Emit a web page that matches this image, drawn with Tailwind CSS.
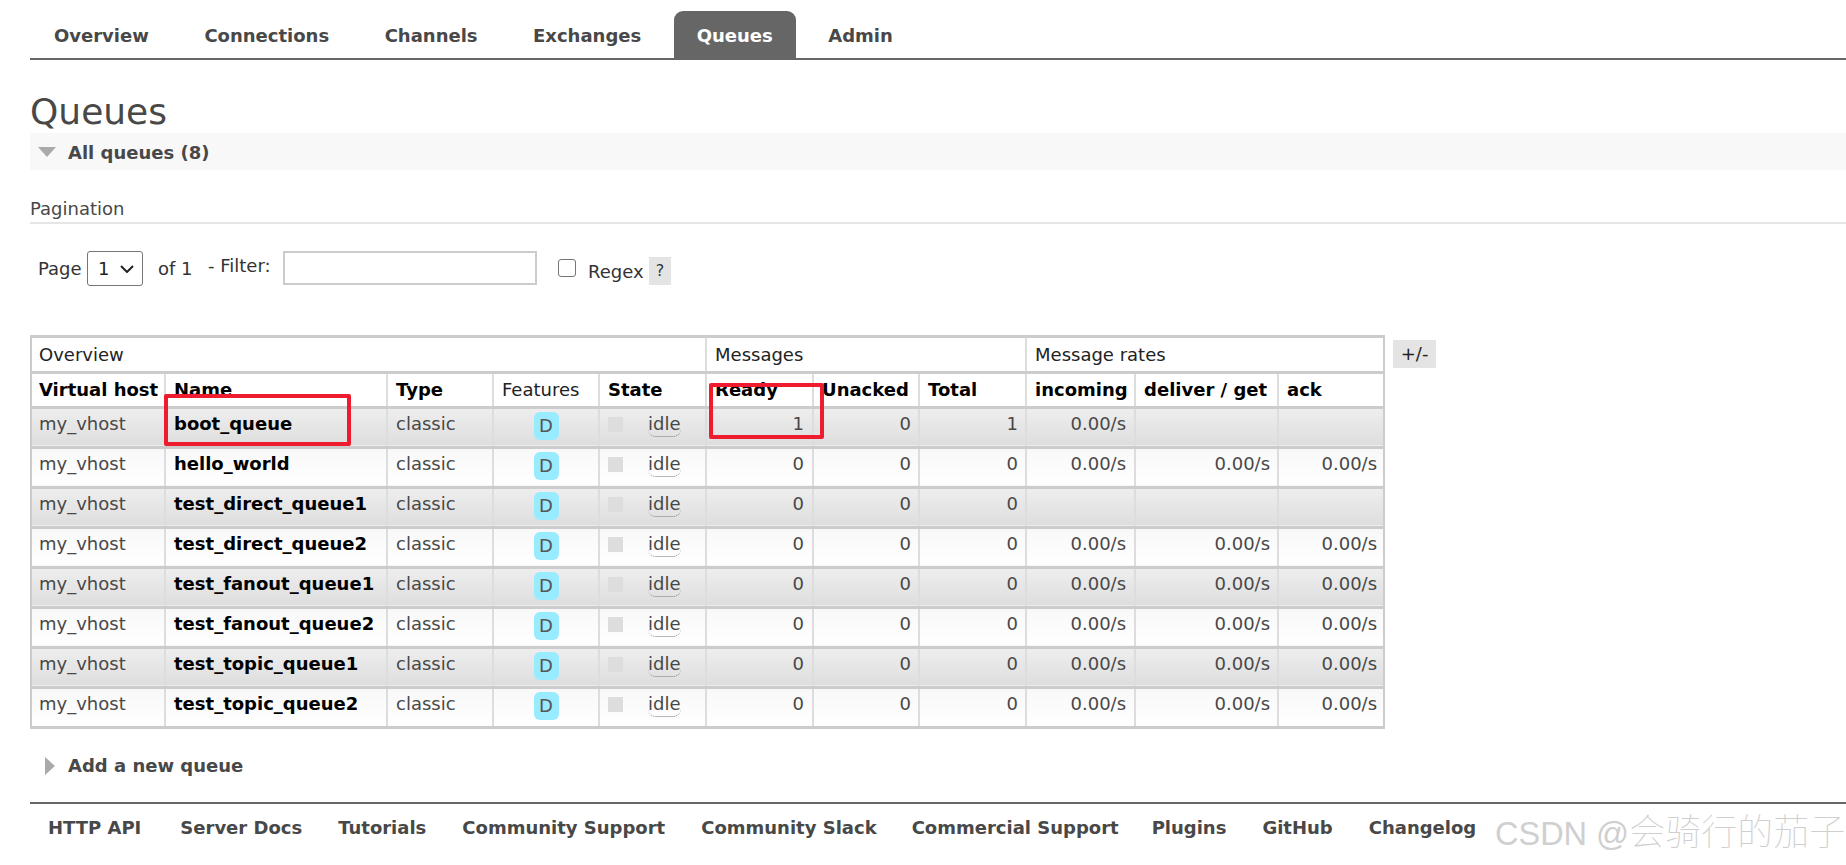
<!doctype html>
<html lang="en">
<head>
<meta charset="utf-8">
<title>Queues</title>
<script src="https://cdn.jsdelivr.net/npm/@tailwindcss/browser@4"></script>
</head>
<body class="relative h-[865px] w-[1846px] overflow-hidden bg-white font-['DejaVu_Sans',sans-serif] text-[18px] leading-[24px] text-[#484848]">
<header class="ml-[30px] flex h-[60px] items-end gap-[9.5px] border-b-2 border-[#666] pl-px font-bold text-[#484848]">
  <a class="flex h-[47px] items-center px-[23px] pt-[2px]">Overview</a>
  <a class="flex h-[47px] items-center px-[23px] pt-[2px]">Connections</a>
  <a class="flex h-[47px] items-center px-[23px] pt-[2px]">Channels</a>
  <a class="flex h-[47px] items-center px-[23px] pt-[2px]">Exchanges</a>
  <a class="flex h-[47px] items-center rounded-t-[9px] bg-[#666] px-[23px] pt-[2px] text-white">Queues</a>
  <a class="flex h-[47px] items-center px-[23px] pt-[2px]">Admin</a>
</header>
<main class="ml-[30px]">
  <h1 class="mt-[30px] h-[43px] text-[36px] leading-[43px] font-normal text-[#484848]">Queues</h1>
  <div class="flex h-[37px] items-center bg-[#f8f8f8] pl-[8px] font-bold">
    <svg width="18" height="10" viewBox="0 0 18 10" class="mr-[12px]"><path d="M0 0H18L9 10Z" fill="#aaa"/></svg>
    <span class="mt-[2px]">All queues (8)</span>
  </div>
  <div class="mt-[27px] h-[27px] border-b-2 border-[#e6e6e6] leading-[24px]">Pagination</div>
  <div class="relative mt-[27px] flex h-[35px] items-start text-[#333]">
    <span class="ml-[8px] mt-[6px] w-[49px]">Page</span>
    <span class="flex h-[35px] w-[56px] items-center justify-between rounded-[3px] border border-[#767676] pl-[10px] pr-[8px] text-[#222]">1<svg width="14" height="8" viewBox="0 0 14 8"><path d="M1 1L7 7L13 1" fill="none" stroke="#222" stroke-width="2"/></svg></span>
    <span class="ml-[15px] mt-[6px] w-[50px]">of 1</span>
    <span class="mt-[3px] w-[75px]">- Filter:</span>
    <span class="h-[34px] w-[254px] border-2 border-[#ccc] bg-white"></span>
    <span class="ml-[21px] mt-[8px] h-[18px] w-[18px] rounded-[3px] border border-[#767676] bg-white"></span>
    <span class="ml-[12px] mt-[9px] w-[61px]">Regex</span>
    <span class="mt-[6px] flex h-[28px] w-[22px] items-center justify-center bg-[#e4e4e4] text-[16px] font-medium">?</span>
  </div>
  <div class="ml-0 mt-[49px] flex items-start">
    <table class="w-[1353px] table-fixed border-collapse border-x-2 border-b-[3px] border-t-[3px] border-[#ccc]">
      <colgroup>
        <col class="w-[134px]"><col class="w-[222px]"><col class="w-[106px]"><col class="w-[106px]"><col class="w-[107px]"><col class="w-[107px]"><col class="w-[106px]"><col class="w-[107px]"><col class="w-[109px]"><col class="w-[143px]"><col class="w-[106px]">
      </colgroup>
      <thead class="text-left text-[#222]">
        <tr class="h-[36px] border-b-[3px] border-[#ccc]">
          <th colspan="5" class="border-r-2 border-[#ddd] pl-[7px] pr-[8px] pt-px font-normal">Overview</th>
          <th colspan="3" class="border-r-2 border-[#ddd] px-[8px] pt-px font-normal">Messages</th>
          <th colspan="3" class="px-[8px] pt-px font-normal">Message rates</th>
        </tr>
        <tr class="h-[35px] border-b-[3px] border-[#ccc] text-black">
          <th class="border-r-2 border-[#ddd] pl-[7px] font-bold whitespace-nowrap">Virtual host</th>
          <th class="border-r-2 border-[#ddd] px-[8px] font-bold">Name</th>
          <th class="border-r-2 border-[#ddd] px-[8px] font-bold">Type</th>
          <th class="border-r-2 border-[#ddd] px-[8px] font-normal text-[#222]">Features</th>
          <th class="border-r-2 border-[#ddd] px-[8px] font-bold">State</th>
          <th class="border-r-2 border-[#ddd] px-[8px] font-bold">Ready</th>
          <th class="border-r-2 border-[#ddd] px-[8px] font-bold">Unacked</th>
          <th class="border-r-2 border-[#ddd] px-[8px] font-bold">Total</th>
          <th class="border-r-2 border-[#ddd] px-[8px] font-bold">incoming</th>
          <th class="border-r-2 border-[#ddd] px-[8px] font-bold">deliver / get</th>
          <th class="px-[8px] font-bold">ack</th>
        </tr>
      </thead>
      <tbody>
        <tr class="h-[40px] border-b-[3px] border-[#ccc] bg-gradient-to-b from-[#eeeeee] to-[#dedede]">
          <td class="border-r-2 border-[#ddd] pl-[7px] pt-[3px] align-top">my_vhost</td>
          <td class="border-r-2 border-[#ddd] pl-[8px] pt-[3px] align-top font-bold text-black">boot_queue</td>
          <td class="border-r-2 border-[#ddd] pl-[8px] pt-[3px] align-top">classic</td>
          <td class="border-r-2 border-[#ddd] pt-[3px] align-top"><span class="mx-auto flex h-[28px] w-[25px] items-center justify-center rounded-[6px] bg-[#99ebff] text-[#555]">D</span></td>
          <td class="border-r-2 border-[#ddd] pl-[8px] pt-[3px] align-top"><div class="flex items-start"><span class="mt-[5px] h-[15px] w-[15px] bg-[#ddd]"></span><span class="ml-[25px] rounded-b-[8px] border-b border-dotted border-[#777] leading-[24px]">idle</span></div></td>
          <td class="border-r-2 border-[#ddd] pr-[8px] pt-[3px] text-right align-top">1</td>
          <td class="border-r-2 border-[#ddd] pr-[7px] pt-[3px] text-right align-top">0</td>
          <td class="border-r-2 border-[#ddd] pr-[7px] pt-[3px] text-right align-top">1</td>
          <td class="border-r-2 border-[#ddd] pr-[8px] pt-[3px] text-right align-top">0.00/s</td>
          <td class="border-r-2 border-[#ddd] pr-[7px] pt-[3px] text-right align-top"></td>
          <td class="pr-[6px] pt-[3px] text-right align-top"></td>
        </tr>
        <tr class="h-[40px] border-b-[3px] border-[#ccc] bg-gradient-to-b from-[#f8f8f8] to-[#ffffff]">
          <td class="border-r-2 border-[#ddd] pl-[7px] pt-[3px] align-top">my_vhost</td>
          <td class="border-r-2 border-[#ddd] pl-[8px] pt-[3px] align-top font-bold text-black">hello_world</td>
          <td class="border-r-2 border-[#ddd] pl-[8px] pt-[3px] align-top">classic</td>
          <td class="border-r-2 border-[#ddd] pt-[3px] align-top"><span class="mx-auto flex h-[28px] w-[25px] items-center justify-center rounded-[6px] bg-[#99ebff] text-[#555]">D</span></td>
          <td class="border-r-2 border-[#ddd] pl-[8px] pt-[3px] align-top"><div class="flex items-start"><span class="mt-[5px] h-[15px] w-[15px] bg-[#ddd]"></span><span class="ml-[25px] rounded-b-[8px] border-b border-dotted border-[#777] leading-[24px]">idle</span></div></td>
          <td class="border-r-2 border-[#ddd] pr-[8px] pt-[3px] text-right align-top">0</td>
          <td class="border-r-2 border-[#ddd] pr-[7px] pt-[3px] text-right align-top">0</td>
          <td class="border-r-2 border-[#ddd] pr-[7px] pt-[3px] text-right align-top">0</td>
          <td class="border-r-2 border-[#ddd] pr-[8px] pt-[3px] text-right align-top">0.00/s</td>
          <td class="border-r-2 border-[#ddd] pr-[7px] pt-[3px] text-right align-top">0.00/s</td>
          <td class="pr-[6px] pt-[3px] text-right align-top">0.00/s</td>
        </tr>
        <tr class="h-[40px] border-b-[3px] border-[#ccc] bg-gradient-to-b from-[#eeeeee] to-[#dedede]">
          <td class="border-r-2 border-[#ddd] pl-[7px] pt-[3px] align-top">my_vhost</td>
          <td class="border-r-2 border-[#ddd] pl-[8px] pt-[3px] align-top font-bold text-black">test_direct_queue1</td>
          <td class="border-r-2 border-[#ddd] pl-[8px] pt-[3px] align-top">classic</td>
          <td class="border-r-2 border-[#ddd] pt-[3px] align-top"><span class="mx-auto flex h-[28px] w-[25px] items-center justify-center rounded-[6px] bg-[#99ebff] text-[#555]">D</span></td>
          <td class="border-r-2 border-[#ddd] pl-[8px] pt-[3px] align-top"><div class="flex items-start"><span class="mt-[5px] h-[15px] w-[15px] bg-[#ddd]"></span><span class="ml-[25px] rounded-b-[8px] border-b border-dotted border-[#777] leading-[24px]">idle</span></div></td>
          <td class="border-r-2 border-[#ddd] pr-[8px] pt-[3px] text-right align-top">0</td>
          <td class="border-r-2 border-[#ddd] pr-[7px] pt-[3px] text-right align-top">0</td>
          <td class="border-r-2 border-[#ddd] pr-[7px] pt-[3px] text-right align-top">0</td>
          <td class="border-r-2 border-[#ddd] pr-[8px] pt-[3px] text-right align-top"></td>
          <td class="border-r-2 border-[#ddd] pr-[7px] pt-[3px] text-right align-top"></td>
          <td class="pr-[6px] pt-[3px] text-right align-top"></td>
        </tr>
        <tr class="h-[40px] border-b-[3px] border-[#ccc] bg-gradient-to-b from-[#f8f8f8] to-[#ffffff]">
          <td class="border-r-2 border-[#ddd] pl-[7px] pt-[3px] align-top">my_vhost</td>
          <td class="border-r-2 border-[#ddd] pl-[8px] pt-[3px] align-top font-bold text-black">test_direct_queue2</td>
          <td class="border-r-2 border-[#ddd] pl-[8px] pt-[3px] align-top">classic</td>
          <td class="border-r-2 border-[#ddd] pt-[3px] align-top"><span class="mx-auto flex h-[28px] w-[25px] items-center justify-center rounded-[6px] bg-[#99ebff] text-[#555]">D</span></td>
          <td class="border-r-2 border-[#ddd] pl-[8px] pt-[3px] align-top"><div class="flex items-start"><span class="mt-[5px] h-[15px] w-[15px] bg-[#ddd]"></span><span class="ml-[25px] rounded-b-[8px] border-b border-dotted border-[#777] leading-[24px]">idle</span></div></td>
          <td class="border-r-2 border-[#ddd] pr-[8px] pt-[3px] text-right align-top">0</td>
          <td class="border-r-2 border-[#ddd] pr-[7px] pt-[3px] text-right align-top">0</td>
          <td class="border-r-2 border-[#ddd] pr-[7px] pt-[3px] text-right align-top">0</td>
          <td class="border-r-2 border-[#ddd] pr-[8px] pt-[3px] text-right align-top">0.00/s</td>
          <td class="border-r-2 border-[#ddd] pr-[7px] pt-[3px] text-right align-top">0.00/s</td>
          <td class="pr-[6px] pt-[3px] text-right align-top">0.00/s</td>
        </tr>
        <tr class="h-[40px] border-b-[3px] border-[#ccc] bg-gradient-to-b from-[#eeeeee] to-[#dedede]">
          <td class="border-r-2 border-[#ddd] pl-[7px] pt-[3px] align-top">my_vhost</td>
          <td class="border-r-2 border-[#ddd] pl-[8px] pt-[3px] align-top font-bold text-black">test_fanout_queue1</td>
          <td class="border-r-2 border-[#ddd] pl-[8px] pt-[3px] align-top">classic</td>
          <td class="border-r-2 border-[#ddd] pt-[3px] align-top"><span class="mx-auto flex h-[28px] w-[25px] items-center justify-center rounded-[6px] bg-[#99ebff] text-[#555]">D</span></td>
          <td class="border-r-2 border-[#ddd] pl-[8px] pt-[3px] align-top"><div class="flex items-start"><span class="mt-[5px] h-[15px] w-[15px] bg-[#ddd]"></span><span class="ml-[25px] rounded-b-[8px] border-b border-dotted border-[#777] leading-[24px]">idle</span></div></td>
          <td class="border-r-2 border-[#ddd] pr-[8px] pt-[3px] text-right align-top">0</td>
          <td class="border-r-2 border-[#ddd] pr-[7px] pt-[3px] text-right align-top">0</td>
          <td class="border-r-2 border-[#ddd] pr-[7px] pt-[3px] text-right align-top">0</td>
          <td class="border-r-2 border-[#ddd] pr-[8px] pt-[3px] text-right align-top">0.00/s</td>
          <td class="border-r-2 border-[#ddd] pr-[7px] pt-[3px] text-right align-top">0.00/s</td>
          <td class="pr-[6px] pt-[3px] text-right align-top">0.00/s</td>
        </tr>
        <tr class="h-[40px] border-b-[3px] border-[#ccc] bg-gradient-to-b from-[#f8f8f8] to-[#ffffff]">
          <td class="border-r-2 border-[#ddd] pl-[7px] pt-[3px] align-top">my_vhost</td>
          <td class="border-r-2 border-[#ddd] pl-[8px] pt-[3px] align-top font-bold text-black">test_fanout_queue2</td>
          <td class="border-r-2 border-[#ddd] pl-[8px] pt-[3px] align-top">classic</td>
          <td class="border-r-2 border-[#ddd] pt-[3px] align-top"><span class="mx-auto flex h-[28px] w-[25px] items-center justify-center rounded-[6px] bg-[#99ebff] text-[#555]">D</span></td>
          <td class="border-r-2 border-[#ddd] pl-[8px] pt-[3px] align-top"><div class="flex items-start"><span class="mt-[5px] h-[15px] w-[15px] bg-[#ddd]"></span><span class="ml-[25px] rounded-b-[8px] border-b border-dotted border-[#777] leading-[24px]">idle</span></div></td>
          <td class="border-r-2 border-[#ddd] pr-[8px] pt-[3px] text-right align-top">0</td>
          <td class="border-r-2 border-[#ddd] pr-[7px] pt-[3px] text-right align-top">0</td>
          <td class="border-r-2 border-[#ddd] pr-[7px] pt-[3px] text-right align-top">0</td>
          <td class="border-r-2 border-[#ddd] pr-[8px] pt-[3px] text-right align-top">0.00/s</td>
          <td class="border-r-2 border-[#ddd] pr-[7px] pt-[3px] text-right align-top">0.00/s</td>
          <td class="pr-[6px] pt-[3px] text-right align-top">0.00/s</td>
        </tr>
        <tr class="h-[40px] border-b-[3px] border-[#ccc] bg-gradient-to-b from-[#eeeeee] to-[#dedede]">
          <td class="border-r-2 border-[#ddd] pl-[7px] pt-[3px] align-top">my_vhost</td>
          <td class="border-r-2 border-[#ddd] pl-[8px] pt-[3px] align-top font-bold text-black">test_topic_queue1</td>
          <td class="border-r-2 border-[#ddd] pl-[8px] pt-[3px] align-top">classic</td>
          <td class="border-r-2 border-[#ddd] pt-[3px] align-top"><span class="mx-auto flex h-[28px] w-[25px] items-center justify-center rounded-[6px] bg-[#99ebff] text-[#555]">D</span></td>
          <td class="border-r-2 border-[#ddd] pl-[8px] pt-[3px] align-top"><div class="flex items-start"><span class="mt-[5px] h-[15px] w-[15px] bg-[#ddd]"></span><span class="ml-[25px] rounded-b-[8px] border-b border-dotted border-[#777] leading-[24px]">idle</span></div></td>
          <td class="border-r-2 border-[#ddd] pr-[8px] pt-[3px] text-right align-top">0</td>
          <td class="border-r-2 border-[#ddd] pr-[7px] pt-[3px] text-right align-top">0</td>
          <td class="border-r-2 border-[#ddd] pr-[7px] pt-[3px] text-right align-top">0</td>
          <td class="border-r-2 border-[#ddd] pr-[8px] pt-[3px] text-right align-top">0.00/s</td>
          <td class="border-r-2 border-[#ddd] pr-[7px] pt-[3px] text-right align-top">0.00/s</td>
          <td class="pr-[6px] pt-[3px] text-right align-top">0.00/s</td>
        </tr>
        <tr class="h-[40px] bg-gradient-to-b from-[#f8f8f8] to-[#ffffff]">
          <td class="border-r-2 border-[#ddd] pl-[7px] pt-[3px] align-top">my_vhost</td>
          <td class="border-r-2 border-[#ddd] pl-[8px] pt-[3px] align-top font-bold text-black">test_topic_queue2</td>
          <td class="border-r-2 border-[#ddd] pl-[8px] pt-[3px] align-top">classic</td>
          <td class="border-r-2 border-[#ddd] pt-[3px] align-top"><span class="mx-auto flex h-[28px] w-[25px] items-center justify-center rounded-[6px] bg-[#99ebff] text-[#555]">D</span></td>
          <td class="border-r-2 border-[#ddd] pl-[8px] pt-[3px] align-top"><div class="flex items-start"><span class="mt-[5px] h-[15px] w-[15px] bg-[#ddd]"></span><span class="ml-[25px] rounded-b-[8px] border-b border-dotted border-[#777] leading-[24px]">idle</span></div></td>
          <td class="border-r-2 border-[#ddd] pr-[8px] pt-[3px] text-right align-top">0</td>
          <td class="border-r-2 border-[#ddd] pr-[7px] pt-[3px] text-right align-top">0</td>
          <td class="border-r-2 border-[#ddd] pr-[7px] pt-[3px] text-right align-top">0</td>
          <td class="border-r-2 border-[#ddd] pr-[8px] pt-[3px] text-right align-top">0.00/s</td>
          <td class="border-r-2 border-[#ddd] pr-[7px] pt-[3px] text-right align-top">0.00/s</td>
          <td class="pr-[6px] pt-[3px] text-right align-top">0.00/s</td>
        </tr>
      </tbody>
    </table>
    <span class="ml-[8px] mt-[5px] flex h-[28px] w-[43px] items-center justify-center bg-[#e4e4e4] text-[#222]">+/-</span>
  </div>
  <div class="mt-[25px] flex h-[24px] items-center pl-[15px] font-bold">
    <svg width="10" height="18" viewBox="0 0 10 18" class="mr-[13px]"><path d="M0 0L10 9L0 18Z" fill="#aaa"/></svg>
    <span>Add a new queue</span>
  </div>
  <footer class="mt-[24px] flex h-[50px] items-center border-t-2 border-[#666] font-bold text-[#484848]">
    <a class="pl-[18px] pr-[21px]">HTTP API</a>
    <a class="px-[18px]">Server Docs</a>
    <a class="px-[18px]">Tutorials</a>
    <a class="px-[18px]">Community Support</a>
    <a class="pl-[18px] pr-[17px]">Community Slack</a>
    <a class="pl-[18px] pr-[15px]">Commercial Support</a>
    <a class="px-[18px]">Plugins</a>
    <a class="px-[18px]">GitHub</a>
    <a class="px-[18px]">Changelog</a>
  </footer>
</main>
<div class="pointer-events-none absolute left-[164px] top-[394px] h-[52px] w-[187px] rounded-[2px] border-4 border-[#ee1c2e]"></div>
<div class="pointer-events-none absolute left-[709px] top-[383px] h-[56px] w-[115px] rounded-[2px] border-4 border-[#ee1c2e]"></div>
<div class="pointer-events-none absolute left-[1495px] top-[811px] whitespace-nowrap font-['Liberation_Sans','Noto_Sans_CJK_SC',sans-serif] text-[36px] leading-[44px] font-thin text-[#cfcfcf]"><span class="text-[32.5px]">CSDN @</span>会骑行的茄子</div>
</body>
</html>
